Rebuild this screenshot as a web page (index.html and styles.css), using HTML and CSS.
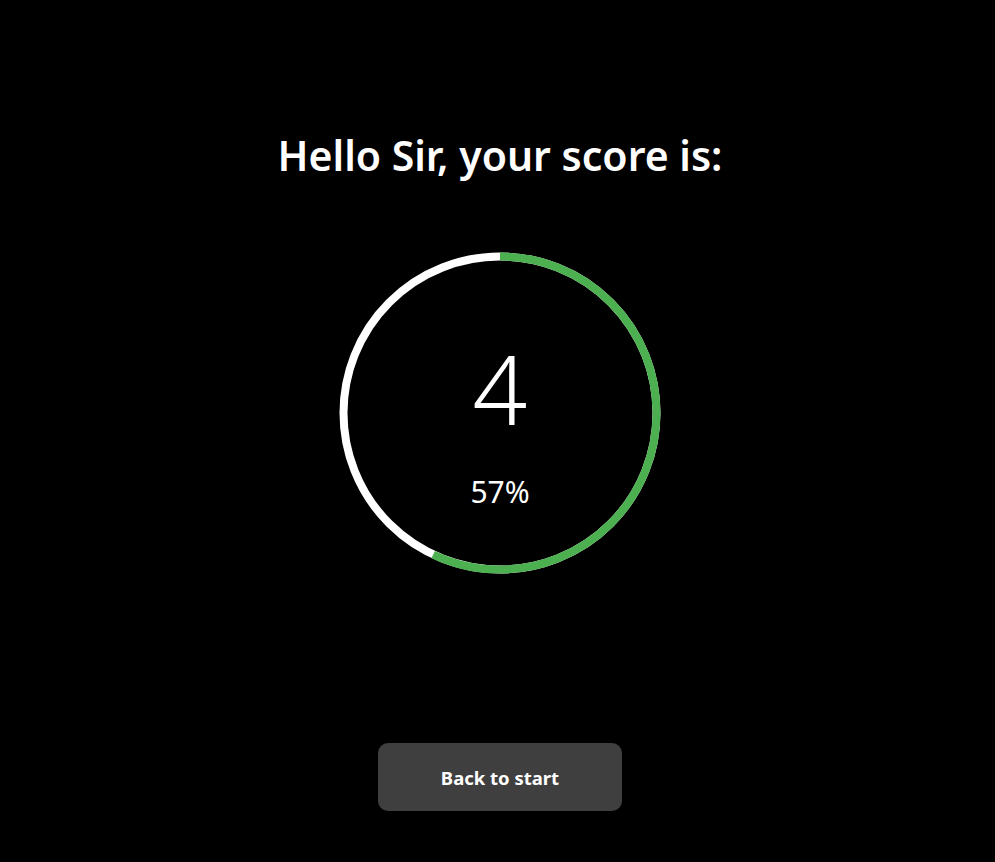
FILE: index.html
```html
<!DOCTYPE html>
<html>
<head>
<meta charset="utf-8">
<link rel="stylesheet" href="styles.css">
</head>
<body>
<main class="page">
  <h1 class="title">Hello Sir, your score is:</h1>
  <div class="ring">
    <svg class="ring-svg" width="322" height="322" viewBox="0 0 322 322">
      <circle cx="161" cy="161" r="156.5" fill="none" stroke="#ffffff" stroke-width="8"/>
      <circle cx="161" cy="161" r="156.5" fill="none" stroke="#4caf50" stroke-width="8"
        stroke-dasharray="560.5 1000" transform="rotate(-90 161 161)"/>
    </svg>
    <div class="ring-text">
      <div class="score">4</div>
      <div class="percent">57%</div>
    </div>
  </div>
  <button class="back">Back to start</button>
</main>
</body>
</html>
```

FILE: styles.css
```css
html, body {
  margin: 0;
  padding: 0;
  background: #000;
  color: #fff;
  font-family: "Noto Sans", "Open Sans", sans-serif;
}
.page {
  display: flex;
  flex-direction: column;
  align-items: center;
  height: 862px;
  padding-left: 5px;
}
.title {
  margin: 127px 0 0;
  font-size: 41px;
  font-weight: 600;
  line-height: 56px;
}
.ring {
  position: relative;
  width: 322px;
  height: 322px;
  margin-top: 69px;
}
.ring-svg {
  display: block;
}
.ring-text {
  position: absolute;
  inset: 0;
  display: flex;
  flex-direction: column;
  align-items: center;
}
.score {
  margin-top: 88px;
  font-size: 96px;
  font-weight: 300;
  line-height: 96px;
}
.percent {
  margin-top: 38px;
  font-size: 30px;
  line-height: 36px;
}
.back {
  margin-top: 169px;
  width: 244px;
  height: 68px;
  border: none;
  border-radius: 10px;
  background: #3f3f3f;
  color: #fff;
  font-family: "Noto Sans", "Open Sans", sans-serif;
  font-size: 18.5px;
  font-weight: 700;
}
```
